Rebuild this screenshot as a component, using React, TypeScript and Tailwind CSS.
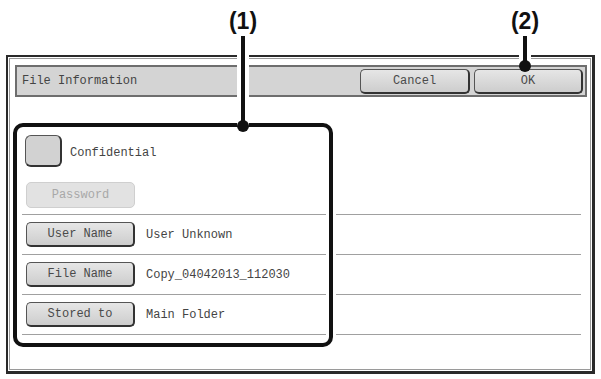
import React from "react";

const mono = { fontFamily: '"Liberation Mono", "Courier New", monospace' };

function KeyButton({ label, width = "w-[109px]" }: { label: string; width?: string }) {
  return (
    <div
      className={`${width} h-[25px] flex items-center justify-center rounded-[5px] border border-[#555] border-r-2 border-b-2 border-r-[#333] border-b-[#333] bg-gradient-to-b from-[#e6e6e6] to-[#cdcdcd] text-[12px] text-[#4a4a4a]`}
    >
      {label}
    </div>
  );
}

function Row({ label, value }: { label: string; value: string }) {
  return (
    <div className="h-[40px] flex items-center gap-[11px] pl-[4px] border-b border-[#a0a0a0]">
      <KeyButton label={label} />
      <span className="text-[12px] text-[#444]">{value}</span>
    </div>
  );
}

function Callout({ text, x, lineTop, dotY }: { text: string; x: number; lineTop: number; dotY: number }) {
  // annotation marker: number, stem with white halo, dot
  return (
    <>
      <div
        className="absolute top-[6px] w-[40px] text-center text-[23px] font-bold leading-[30px] text-[#111]"
        style={{ left: x - 20, fontFamily: '"Liberation Sans", Arial, sans-serif' }}
      >
        {text}
      </div>
      <div
        className="absolute w-[12px] bg-white flex justify-center"
        style={{ left: x - 6, top: lineTop, height: dotY - lineTop }}
      >
        <div className="w-[4px] h-full bg-[#111]" />
      </div>
      <div
        className="absolute w-[12px] h-[12px] rounded-full bg-[#111]"
        style={{ left: x - 6, top: dotY - 6 }}
      />
    </>
  );
}

export default function App() {
  return (
    <div className="relative w-[601px] h-[379px] bg-white overflow-hidden" style={mono}>
      <div className="pt-[55px] pl-[6px]">
        {/* Dialog frame */}
        <div className="w-[589px] h-[319px] border-l-2 border-t-2 border-r-[3px] border-b-[3px] border-[#2a2a2a] shadow-[inset_0_0_0_1px_white,inset_0_0_0_2px_#9a9a9a] bg-white">
          {/* Title bar */}
          <div className="ml-[7px] mt-[8px] w-[572px] h-[32px] flex items-center justify-between border-2 border-[#6e6e6e] bg-[#d4d4d4] pl-[5px] pr-[2px]">
            <span className="text-[12px] text-[#444]">File Information</span>
            <div className="flex gap-[4px]">
              <KeyButton label="Cancel" width="w-[110px]" />
              <KeyButton label="OK" width="w-[109px]" />
            </div>
          </div>

          {/* Settings list */}
          <div className="ml-[14px] mt-[38px] w-[559px]">
            <div className="h-[32px] flex items-center gap-[8px] pl-[3px]">
              <div className="w-[37px] h-[32px] rounded-[6px] border border-[#555] border-r-2 border-b-2 border-r-[#333] border-b-[#333] bg-[#d2d2d2]" />
              <span className="text-[12px] text-[#444] pt-[3px]">Confidential</span>
            </div>
            <div className="mt-[15px] pb-[6px] pl-[4px] border-b border-[#a0a0a0]">
              <div className="w-[109px] h-[26px] flex items-center justify-center rounded-[5px] border border-[#cfcfcf] bg-[#e2e2e2] text-[12px] text-[#a8a8a8]">
                Password
              </div>
            </div>
            <Row label="User Name" value="User Unknown" />
            <Row label="File Name" value="Copy_04042013_112030" />
            <Row label="Stored to" value="Main Folder" />
          </div>
        </div>
      </div>

      {/* Highlight box (1) */}
      <div className="absolute left-[13px] top-[123px] w-[320px] h-[224px] rounded-[10px] border-[4px] border-[#111] ring-[3px] ring-white shadow-[inset_0_0_0_3px_white]" />

      <Callout text="(1)" x={243} lineTop={36} dotY={126} />
      <Callout text="(2)" x={525} lineTop={36} dotY={66} />
    </div>
  );
}
